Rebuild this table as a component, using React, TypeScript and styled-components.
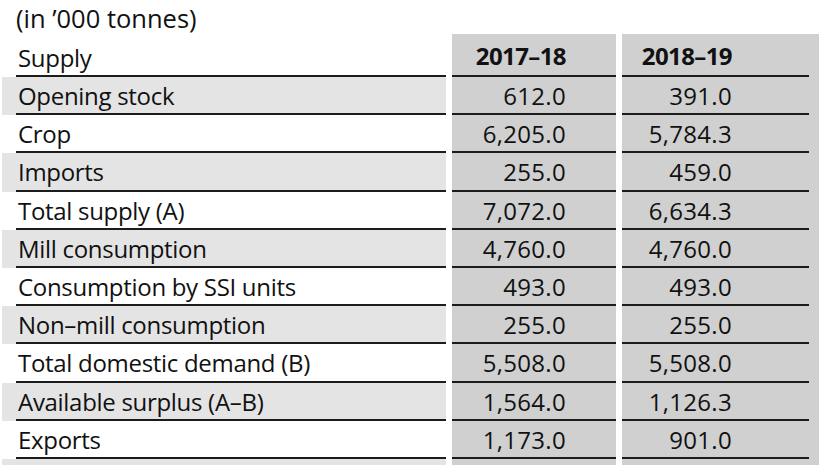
import styled, { createGlobalStyle } from 'styled-components';

const GlobalStyle = createGlobalStyle`
  html, body {
    margin: 0;
    padding: 0;
    background: #fff;
  }
  body {
    font-family: "Open Sans", "Noto Sans", sans-serif;
    color: #111;
  }
`;

const LINE = '#1c1c1c';
const COL_GREY = '#d0d0d0';
const ROW_SHADE = '#e4e4e4';

const Page = styled.div`
  width: 826px;
  height: 465px;
  overflow: hidden;
`;

const Unit = styled.div`
  box-sizing: border-box;
  height: 34px;
  padding: 3px 0 0 16px;
  font-size: 25.5px;
  font-weight: 500;
  line-height: 31px;
  white-space: nowrap;
`;

const Table = styled.div`
  display: grid;
  grid-template-columns: 444px 164px 197px;
  grid-template-rows: 43px;
  grid-auto-rows: 38.2px;
  column-gap: 6px;
  margin-left: 2px;
`;

const LabelCell = styled.div<{ $shaded?: boolean; $head?: boolean }>`
  box-sizing: border-box;
  padding: ${(p) => (p.$head ? '6px' : '1px')} 0 0 16px;
  font-size: 24px;
  font-weight: 500;
  letter-spacing: -0.3px;
  line-height: 36px;
  white-space: nowrap;
  background:
    linear-gradient(${LINE}, ${LINE}) 14px 100% / calc(100% - 14px) 2px no-repeat,
    ${(p) => (p.$shaded ? ROW_SHADE : '#fff')};
`;

const ValueCell = styled.div<{ $col: 1 | 2; $head?: boolean }>`
  box-sizing: border-box;
  padding: ${(p) => (p.$head ? '4px' : '1px')} ${(p) => (p.$col === 1 ? '50px' : '87px')} 0 0;
  text-align: right;
  font-size: 24px;
  font-weight: ${(p) => (p.$head ? 700 : 500)};
  letter-spacing: ${(p) => (p.$head ? '-0.6px' : '0.3px')};
  line-height: 36px;
  white-space: nowrap;
  background:
    linear-gradient(${LINE}, ${LINE}) 0 100% / ${(p) => (p.$col === 1 ? '100%' : 'calc(100% - 10px)')} 2px no-repeat,
    ${COL_GREY};
`;

const rows: [string, string, string][] = [
  ['Opening stock', '612.0', '391.0'],
  ['Crop', '6,205.0', '5,784.3'],
  ['Imports', '255.0', '459.0'],
  ['Total supply (A)', '7,072.0', '6,634.3'],
  ['Mill consumption', '4,760.0', '4,760.0'],
  ['Consumption by SSI units', '493.0', '493.0'],
  ['Non–mill consumption', '255.0', '255.0'],
  ['Total domestic demand (B)', '5,508.0', '5,508.0'],
  ['Available surplus (A–B)', '1,564.0', '1,126.3'],
  ['Exports', '1,173.0', '901.0'],
];

export default function App() {
  return (
    <Page>
      <GlobalStyle />
      <Unit>(in ’000 tonnes)</Unit>
      <Table>
        <LabelCell $head>Supply</LabelCell>
        <ValueCell $col={1} $head>2017–18</ValueCell>
        <ValueCell $col={2} $head>2018–19</ValueCell>
        {rows.flatMap(([label, a, b], i) => [
          <LabelCell key={label} $shaded={i % 2 === 0}>{label}</LabelCell>,
          <ValueCell key={label + '-a'} $col={1}>{a}</ValueCell>,
          <ValueCell key={label + '-b'} $col={2}>{b}</ValueCell>,
        ])}
        <LabelCell $shaded />
        <ValueCell $col={1} />
        <ValueCell $col={2} />
      </Table>
    </Page>
  );
}
